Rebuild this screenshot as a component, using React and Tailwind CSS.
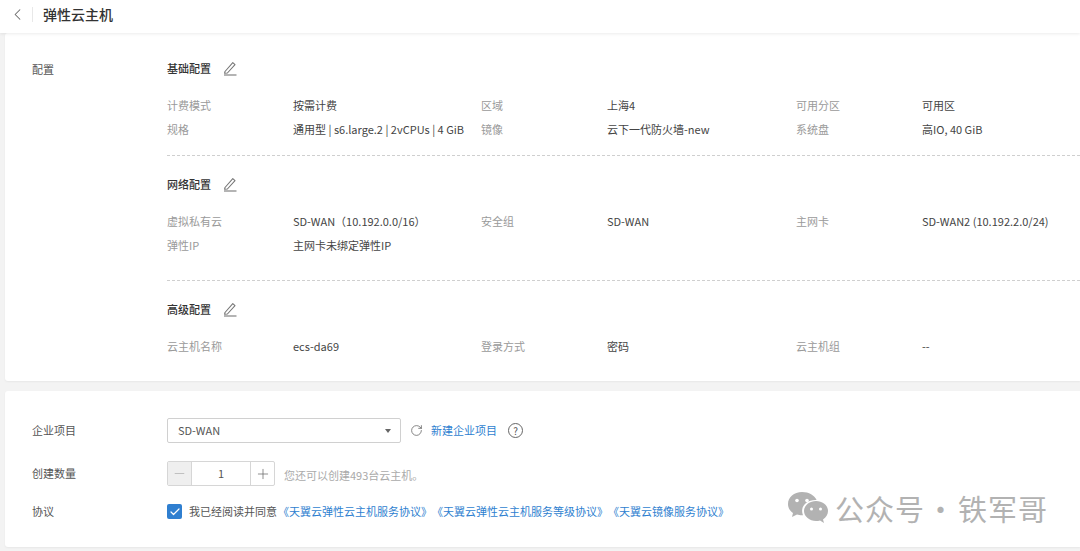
import { ChevronLeft, RotateCw, Minus, Plus, Check } from "lucide-react";

function Pencil() {
  return (
    <svg width="16" height="16" viewBox="0 0 16 16" fill="none" stroke="#777" strokeWidth="1.1">
      <path d="M3 11.5 L10.8 2.600 L13 4.600 L5.400 13 L2.600 13.200 Z" strokeLinejoin="round" />
      <path d="M2 15 H14.500" />
    </svg>
  );
}

function Row({ items }) {
  return (
    <div className="grid grid-cols-[126px_188px_126px_189px_126px_1fr] h-6 items-center text-[11px]">
      {items.map((t, i) => (
        <div key={i} className={i % 2 === 0 ? "text-[#9a9a9a]" : "text-[#444]"}>
          {t}
        </div>
      ))}
    </div>
  );
}

function SectionTitle({ title }) {
  return (
    <div className="flex items-center h-5 gap-[11px]">
      <span className="text-[11px] font-medium text-[#333]">{title}</span>
      <Pencil />
    </div>
  );
}

function Field({ label, className, children }) {
  return (
    <div className={"flex items-center " + className}>
      <div className="w-[135px] text-[11px] text-[#555]">{label}</div>
      {children}
    </div>
  );
}

export default function App() {
  return (
    <div className="relative w-[1080px] h-[551px] overflow-hidden bg-[#f3f3f3] font-['Noto_Sans_CJK_SC',sans-serif]">
      <div className="h-[33px] bg-white flex items-center pb-[5px] shadow-[0_1px_3px_rgba(0,0,0,0.08)] relative">
        <ChevronLeft size={19} strokeWidth={1.3} className="ml-[8px] text-[#666]" />
        <div className="w-px h-[15px] bg-[#e8e8e8] ml-[5px]" />
        <div className="ml-[10px] text-sm font-medium text-[#333]">弹性云主机</div>
      </div>

      <div className="ml-[5px] h-[348px] bg-white rounded-l-[3px] shadow-[0_1px_2px_rgba(0,0,0,0.05)] flex pt-[25px] pl-[27px]">
        <div className="w-[135px] h-5 mt-[1px] flex items-center text-[11px] text-[#555]">配置</div>
        <div className="flex-1">
          <SectionTitle title="基础配置" />
          <div className="mt-[15px]">
            <Row items={["计费模式", "按需计费", "区域", "上海4", "可用分区", "可用区"]} />
            <Row items={["规格", "通用型 | s6.large.2 | 2vCPUs | 4 GiB", "镜像", "云下一代防火墙-new", "系统盘", "高IO, 40 GiB"]} />
          </div>
          <div className="border-t border-dashed border-[#cfcfcf] mt-[14px] mb-[18px]" />
          <SectionTitle title="网络配置" />
          <div className="mt-[15px]">
            <Row items={["虚拟私有云", "SD-WAN（10.192.0.0/16）", "安全组", "SD-WAN", "主网卡", "SD-WAN2 (10.192.2.0/24)"]} />
            <Row items={["弹性IP", "主网卡未绑定弹性IP", "", "", "", ""]} />
          </div>
          <div className="border-t border-dashed border-[#cfcfcf] mt-[23px] mb-[18px]" />
          <SectionTitle title="高级配置" />
          <div className="mt-[15px]">
            <Row items={["云主机名称", "ecs-da69", "登录方式", "密码", "云主机组", "--"]} />
          </div>
        </div>
      </div>

      <div className="ml-[5px] mt-[10px] h-[156px] bg-white rounded-l-[3px] shadow-[0_1px_2px_rgba(0,0,0,0.05)] pl-[27px] pt-[27px]">
        <Field label="企业项目" className="h-[25px]">
          <div className="w-[234px] h-[25px] border border-[#d0d0d0] rounded-[2px] flex items-center justify-between pl-[10px] pr-[9px] text-[11px] text-[#555]">
            SD-WAN
            <span className="w-0 h-0 border-x-[3.5px] border-x-transparent border-t-[4px] border-t-[#666]" />
          </div>
          <RotateCw size={13} strokeWidth={1.3} className="ml-[9px] text-[#555]" />
          <span className="ml-[8px] text-[11px] text-[#2f7fd0]">新建企业项目</span>
          <span className="ml-[11px] w-[15px] h-[15px] rounded-full border border-[#666] flex items-center justify-center text-[10px] text-[#555]">?</span>
        </Field>
        <Field label="创建数量" className="h-[25px] mt-[18px]">
          <div className="flex h-[25px] w-[108px] border border-[#d6d6d6] rounded-[2px]">
            <div className="w-6 bg-[#efefef] border-r border-[#d6d6d6] flex items-center justify-center">
              <Minus size={15} strokeWidth={1.1} className="text-[#aaa]" />
            </div>
            <div className="flex-1 flex items-center justify-center text-[11px] text-[#555]">1</div>
            <div className="w-6 border-l border-[#d6d6d6] flex items-center justify-center">
              <Plus size={16} strokeWidth={1.1} className="text-[#666]" />
            </div>
          </div>
          <span className="ml-[9px] mt-[3px] text-[11px] text-[#aaa]">您还可以创建493台云主机。</span>
        </Field>
        <Field label="协议" className="h-[15px] mt-[18px]">
          <div className="w-[15px] h-[15px] rounded-[2px] bg-[#2f7fd0] flex items-center justify-center">
            <Check size={12} strokeWidth={2.4} className="text-white" />
          </div>
          <span className="ml-[7px] text-[11px] text-[#555]">我已经阅读并同意</span>
          <span className="ml-[1px] text-[11px] text-[#2f7fd0] whitespace-nowrap">《天翼云弹性云主机服务协议》</span>
          <span className="text-[11px] text-[#2f7fd0] whitespace-nowrap">《天翼云弹性云主机服务等级协议》</span>
          <span className="text-[11px] text-[#2f7fd0] whitespace-nowrap">《天翼云镜像服务协议》</span>
        </Field>
      </div>

      {/* watermark */}
      <div className="absolute left-[787px] top-[491px] flex items-center text-[#b2b2b2]">
        <svg width="42" height="34" viewBox="0 0 42 34" fill="#b2b2b2">
          <path d="M15 1C7 1 1 6 1 13c0 4 2 7 5 9l-1 4 5-2.500c1.500.4 3 .7 5 .7h1c-.6-1.400-.9-2.800-.9-4.200C15.100 13.500 21 9 28.400 9c.4 0 .8 0 1.200.1C27.500 4.300 22 1 15 1z" />
          <path d="M41 20c0-6-5.600-10-12-10s-12 4.500-12 10 5.600 10 12 10c1.400 0 2.700-.2 4-.6l4 2.600-1-3.600C39 26.500 41 23.500 41 20z" />
          <circle cx="10" cy="9.500" r="1.800" fill="#fff" />
          <circle cx="20" cy="9.500" r="1.800" fill="#fff" />
          <circle cx="24.500" cy="18" r="1.500" fill="#fff" />
          <circle cx="33.500" cy="18" r="1.500" fill="#fff" />
        </svg>
        <span className="ml-[6px] text-[29px] leading-none tracking-[1px] whitespace-nowrap">公众号</span>
        <span className="ml-[1px] text-[29px] leading-none whitespace-nowrap">·</span>
        <span className="ml-[3px] text-[29px] leading-none tracking-[1px] whitespace-nowrap">铁军哥</span>
      </div>
    </div>
  );
}
